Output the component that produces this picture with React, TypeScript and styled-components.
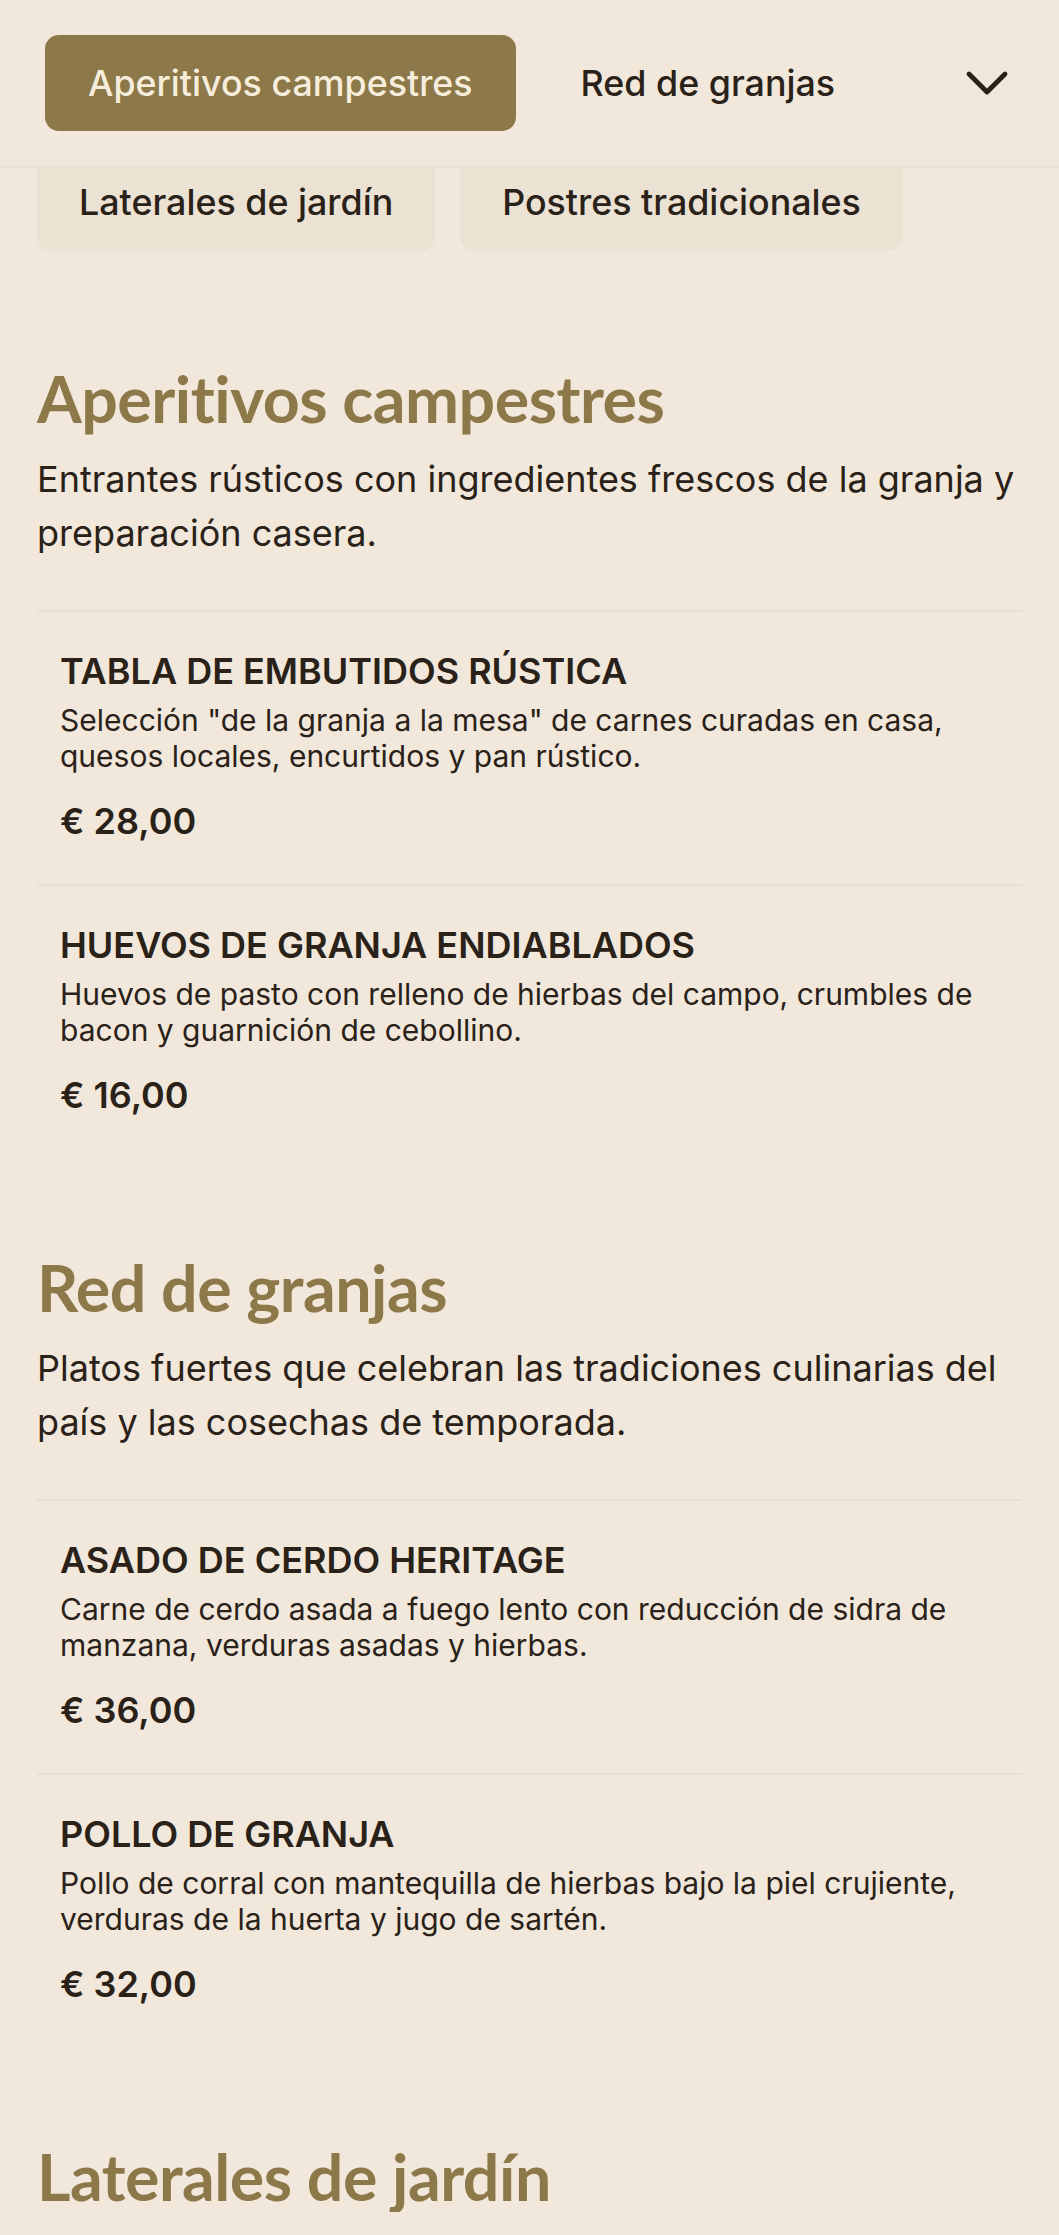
import React from "react";
import styled, { createGlobalStyle } from "styled-components";

const GlobalStyle = createGlobalStyle`
  body {
    margin: 0;
    background: #f1e8db;
    font-family: Inter, "Noto Sans", sans-serif;
    color: #2a2119;
  }
`;

const Header = styled.header`
  display: flex;
  align-items: center;
  height: 168px;
  padding: 0 50px 0 45px;
  box-sizing: border-box;
  border-bottom: 2px solid #e9e0d1;
`;

const TabRow = styled.nav`
  display: flex;
  align-items: center;
  gap: 22px;
`;

const Tab = styled.button<{ $active?: boolean }>`
  height: 96px;
  padding: 0 43px;
  border: none;
  border-radius: 14px;
  font-family: Inter, sans-serif;
  font-size: 35.8px;
  font-weight: 500;
  background: ${(p) => (p.$active ? "#8c7849" : "transparent")};
  color: ${(p) => (p.$active ? "#f6eddc" : "#2a2119")};
  cursor: pointer;
`;

const ToggleButton = styled.button`
  margin-left: auto;
  display: flex;
  align-items: center;
  background: none;
  border: none;
  padding: 0;
  color: #2a2119;
`;

const SubTabRow = styled.div`
  display: flex;
  gap: 25px;
  padding: 0 37px;
`;

const SubTab = styled.button`
  height: 83px;
  padding: 0 42px 15px;
  border: none;
  border-radius: 0 0 14px 14px;
  background: #ebe2d3;
  font-family: Inter, sans-serif;
  font-size: 35.8px;
  font-weight: 500;
  color: #2a2119;
`;

const Main = styled.main`
  display: flex;
  flex-direction: column;
  gap: 93px;
  padding: 111px 37px 0;
`;

const Section = styled.section`
  display: flex;
  flex-direction: column;
`;

const SectionTitle = styled.h2`
  margin: 0;
  font-family: Lato, "Open Sans", sans-serif;
  font-size: 64.5px;
  font-weight: 700;
  line-height: 72px;
  color: #8c7849;
  letter-spacing: -0.5px;
`;

const SectionIntro = styled.p`
  margin: 18px 0 0;
  font-size: 36px;
  line-height: 54px;
`;

const ItemList = styled.div`
  margin-top: 50px;
  display: flex;
  flex-direction: column;
`;

const Item = styled.article`
  padding: 39px 23px 43px;
  border-top: 2px solid #e8dfd0;
`;

const ItemName = styled.h3`
  margin: 0;
  font-size: 36px;
  font-weight: 600;
  line-height: 40px;
`;

const ItemDesc = styled.p`
  margin: 11px 0 0;
  font-size: 30px;
  line-height: 36px;
`;

const Price = styled.div`
  margin-top: 27px;
  font-size: 36px;
  font-weight: 600;
  line-height: 40px;
`;

type Dish = { name: string; desc: string; price: string };
type Category = { title: string; intro?: string; dishes: Dish[] };

const menu: Category[] = [
  {
    title: "Aperitivos campestres",
    intro: "Entrantes rústicos con ingredientes frescos de la granja y preparación casera.",
    dishes: [
      {
        name: "TABLA DE EMBUTIDOS RÚSTICA",
        desc: 'Selección "de la granja a la mesa" de carnes curadas en casa, quesos locales, encurtidos y pan rústico.',
        price: "€ 28,00",
      },
      {
        name: "HUEVOS DE GRANJA ENDIABLADOS",
        desc: "Huevos de pasto con relleno de hierbas del campo, crumbles de bacon y guarnición de cebollino.",
        price: "€ 16,00",
      },
    ],
  },
  {
    title: "Red de granjas",
    intro: "Platos fuertes que celebran las tradiciones culinarias del país y las cosechas de temporada.",
    dishes: [
      {
        name: "ASADO DE CERDO HERITAGE",
        desc: "Carne de cerdo asada a fuego lento con reducción de sidra de manzana, verduras asadas y hierbas.",
        price: "€ 36,00",
      },
      {
        name: "POLLO DE GRANJA",
        desc: "Pollo de corral con mantequilla de hierbas bajo la piel crujiente, verduras de la huerta y jugo de sartén.",
        price: "€ 32,00",
      },
    ],
  },
  { title: "Laterales de jardín", dishes: [] },
];

const Chevron = () => (
  <svg width="44" height="26" viewBox="0 0 44 26" fill="none">
    <polyline
      points="4,4 22,22 40,4"
      stroke="currentColor"
      strokeWidth="4.8"
      strokeLinecap="round"
      strokeLinejoin="round"
    />
  </svg>
);

const App: React.FC = () => {
  return (
    <>
      <GlobalStyle />
      <Header>
        <TabRow>
          <Tab $active>Aperitivos campestres</Tab>
          <Tab>Red de granjas</Tab>
        </TabRow>
        <ToggleButton aria-label="Más categorías">
          <Chevron />
        </ToggleButton>
      </Header>
      <SubTabRow>
        <SubTab>Laterales de jardín</SubTab>
        <SubTab>Postres tradicionales</SubTab>
      </SubTabRow>
      <Main>
        {menu.map((cat) => (
          <Section key={cat.title}>
            <SectionTitle>{cat.title}</SectionTitle>
            {cat.intro && <SectionIntro>{cat.intro}</SectionIntro>}
            {cat.dishes.length > 0 && (
              <ItemList>
                {cat.dishes.map((d) => (
                  <Item key={d.name}>
                    <ItemName>{d.name}</ItemName>
                    <ItemDesc>{d.desc}</ItemDesc>
                    <Price>{d.price}</Price>
                  </Item>
                ))}
              </ItemList>
            )}
          </Section>
        ))}
      </Main>
    </>
  );
};

export default App;
